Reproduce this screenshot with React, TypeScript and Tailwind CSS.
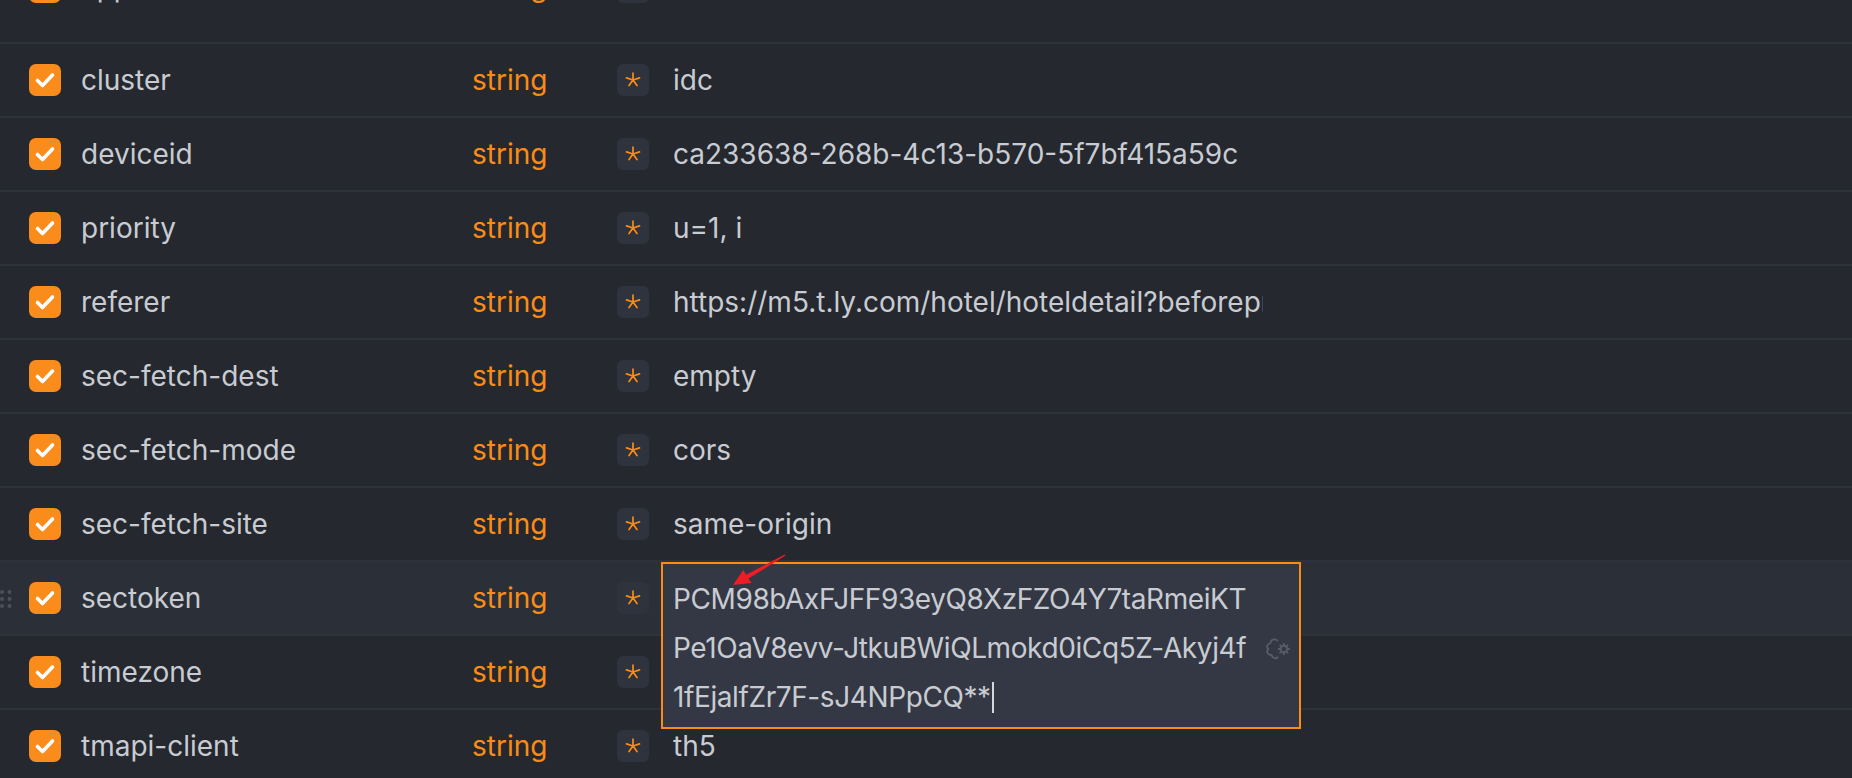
import React from "react";

type Header = { name: string; value: string; hovered?: boolean };

// values of sectoken / timezone sit under the open editor, so they stay empty here
const headers: Header[] = [
    { name: "cluster", value: "idc" },
    { name: "deviceid", value: "ca233638-268b-4c13-b570-5f7bf415a59c" },
    { name: "priority", value: "u=1, i" },
    { name: "referer", value: "https://m5.t.ly.com/hotel/hoteldetail?beforeprice=0&hotelid=9012" },
    { name: "sec-fetch-dest", value: "empty" },
    { name: "sec-fetch-mode", value: "cors" },
    { name: "sec-fetch-site", value: "same-origin" },
    { name: "sectoken", value: "", hovered: true },
    { name: "timezone", value: "" },
    { name: "tmapi-client", value: "th5" },
];

function CheckBox() {
    return (
        <div className="w-8 h-8 shrink-0 rounded-[7px] bg-[#fa8c1b] flex items-center justify-center">
            <svg width="32" height="32" viewBox="0 0 32 32" fill="none">
                <path d="M8.5 16.5 L13.5 21.5 L23.5 11" stroke="white" strokeWidth="3.6" strokeLinecap="round" strokeLinejoin="round" />
            </svg>
        </div>
    );
}

function Asterisk() {
    return (
        <div className="w-8 h-8 shrink-0 rounded-[6px] bg-[#2e333d] flex items-center justify-center">
            <svg width="16" height="16" viewBox="-8 -8 16 16" fill="none" stroke="#fa8c16" strokeWidth="1.7" strokeLinecap="round">
                <path d="M0 0 V-6.8 M0 0 L6.5 -2.1 M0 0 L-6.5 -2.1 M0 0 L4 5.5 M0 0 L-4 5.5" />
            </svg>
        </div>
    );
}

function DragHandle() {
    return (
        <svg className="absolute left-0 top-[27px]" width="14" height="20" viewBox="0 0 14 20" fill="#4b505a">
            <circle cx="2" cy="3" r="2" />
            <circle cx="9.5" cy="3" r="2" />
            <circle cx="2" cy="10" r="2" />
            <circle cx="9.5" cy="10" r="2" />
            <circle cx="2" cy="17" r="2" />
            <circle cx="9.5" cy="17" r="2" />
        </svg>
    );
}

function RowContent({ h }: { h: Header }) {
    return (
        <>
            <CheckBox />
            <div className="ml-5 w-[391px] text-[28px] text-[#c8ccd2] whitespace-nowrap">{h.name}</div>
            <div className="w-[145px] text-[28px] text-[#fa8c16]">string</div>
            <Asterisk />
            <div className="ml-6 w-[590px] overflow-hidden whitespace-nowrap text-[28px] text-[#c8ccd2]">{h.value}</div>
        </>
    );
}

function Row({ h }: { h: Header }) {
    return (
        <div className={`relative flex items-center h-[74px] shrink-0 border-b-2 border-[#2e323a] pl-[29px] ${h.hovered ? "bg-[#2b2f38]" : ""}`}>
            {h.hovered && <DragHandle />}
            <RowContent h={h} />
        </div>
    );
}

export default function App() {
    return (
        <div className="relative w-full h-[778px] overflow-hidden bg-[#25282e]" style={{ fontFamily: "Inter, 'Noto Sans', sans-serif" }}>
            <div className="flex flex-col">
                {/* previous row, scrolled almost out of view */}
                <div className="h-[44px] shrink-0 overflow-hidden border-b-2 border-[#2e323a]">
                    <div className="flex items-center h-[72px] -mt-[49px] pl-[29px]">
                        <RowContent h={{ name: "appid", value: "h5" }} />
                    </div>
                </div>
                {headers.map((h) => (
                    <Row key={h.name} h={h} />
                ))}
            </div>

            {/* inline editor over the sectoken value */}
            <div className="absolute left-[661px] top-[562px] w-[640px] h-[167px] border-2 border-[#fa8c16] bg-[#343844] pl-[10px] pt-[11px] text-[28px] tracking-[-0.4px] leading-[49px] text-[#c8ccd2] whitespace-nowrap">
                <div>PCM98bAxFJFF93eyQ8XzFZO4Y7taRmeiKT</div>
                <div>Pe1OaV8evv-JtkuBWiQLmokd0iCq5Z-Akyj4f</div>
                <div className="flex items-center">
                    <span>1fEjalfZr7F-sJ4NPpCQ**</span>
                    <span className="inline-block w-[2px] h-[31px] bg-[#d4d7dc] ml-[1px]" />
                </div>
                <svg className="absolute left-[602px] top-[73px]" width="28" height="24" viewBox="0 0 26 22" fill="none" stroke="#575c66" strokeWidth="1.7">
                    <path d="M12 3.5 C9 1 5 2 5 5.5 C2 6 1 9 3 11 C1 13 2.5 17 6 16.5 C7 20 11 20.5 12 18" />
                    <circle cx="17.5" cy="11" r="3" />
                    <path d="M17.5 5.5 V7.5 M17.5 14.5 V16.5 M12 11 H14 M21 11 H23 M13.6 7.1 L15 8.5 M20 13.5 L21.4 14.9 M13.6 14.9 L15 13.5 M20 8.5 L21.4 7.1" />
                </svg>
            </div>

            {/* red annotation arrow */}
            <svg className="absolute left-[728px] top-[550px]" width="62" height="42" viewBox="0 0 62 42">
                <polygon points="5,35 15.3,20 18.2,24.8 56.6,4.4 57.4,5.6 20.4,28.6 23.6,33" fill="#ee1c25" />
            </svg>
        </div>
    );
}
